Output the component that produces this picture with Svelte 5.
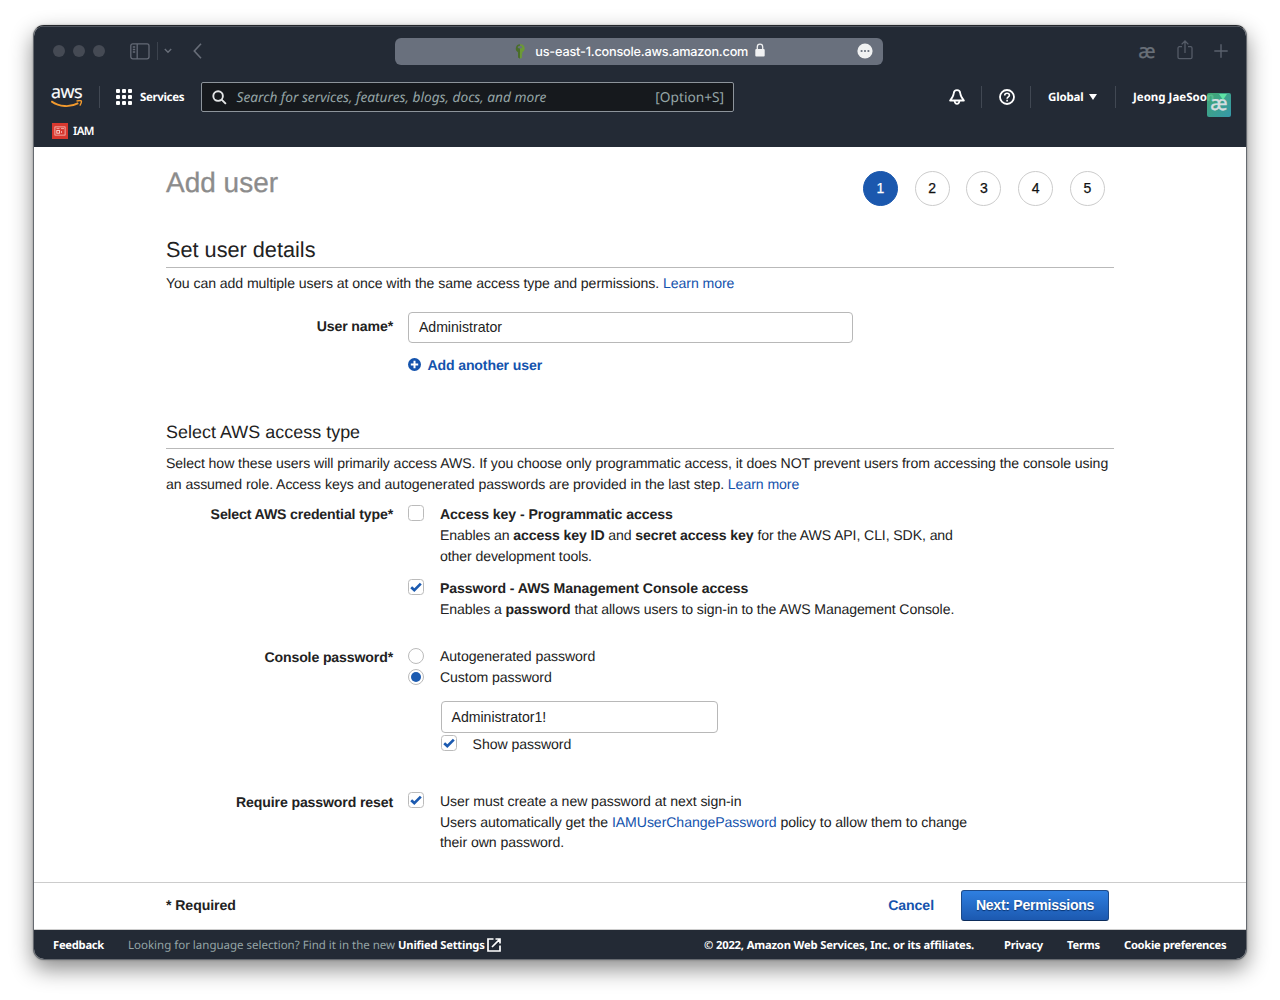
<script lang="ts">
  const steps = [1, 2, 3, 4, 5];
  let current = $state(1);

  let userName = $state("Administrator");
  let password = $state("Administrator1!");
  let programmatic = $state(false);
  let consoleAccess = $state(true);
  let passwordMode = $state<"auto" | "custom">("custom");
  let showPassword = $state(true);
  let requireReset = $state(true);
</script>

{#snippet check(on: boolean, toggle: () => void, label: string)}
  <button class="box" role="checkbox" aria-checked={on} aria-label={label} onclick={toggle}>
    {#if on}
      <svg width="12" height="10" viewBox="0 0 12 10"><path d="M1.2 5.2 4.3 8.1 10.8 1.6" fill="none" stroke="#1b5ab0" stroke-width="2.7" /></svg>
    {/if}
  </button>
{/snippet}

<div class="window">
  <header>
    <div class="titlebar">
      <div class="lights"><i></i><i></i><i></i></div>
      <svg class="sidebar" width="20" height="17" viewBox="0 0 20 17" fill="none" stroke="#646a76" stroke-width="1.3">
        <rect x=".8" y=".8" width="18.2" height="15" rx="2" />
        <path d="M7.2 1v15M2.8 4h2.4M2.8 6.5h2.4M2.8 9h2.4" />
      </svg>
      <span class="tsep"></span>
      <svg class="chev" width="8" height="6" viewBox="0 0 8 6" fill="none" stroke="#686e79" stroke-width="1.4"><path d="M.8 1 4 4.2 7.2 1" /></svg>
      <svg class="back" width="9" height="16" viewBox="0 0 9 16" fill="none" stroke="#686e79" stroke-width="1.6"><path d="M8 .8 1.3 8 8 15.2" /></svg>
      <div class="address">
        <svg class="key" width="10" height="15" viewBox="0 0 10 15">
          <path d="M5 .3a4.2 4.2 0 0 0-2 7.900V13.600L5 14.800z" fill="#4a6e2a" />
          <path d="M5 .3a4.200 4.200 0 0 1 2.400 7.900v1.500l-.8.900.8.900-.8 1 .8.900-2.400 1.400z" fill="#6c9a35" />
          <ellipse cx="5" cy="3.2" rx="2" ry="1.4" fill="#69717e" />
        </svg>
        <span class="url">us-east-1.console.aws.amazon.com</span>
        <svg class="lock" width="10" height="14" viewBox="0 0 10 14"><rect x=".3" y="6" width="9.4" height="7.6" rx="1" fill="#f0f1f2" /><path d="M2.3 6.5V3.9a2.7 2.7 0 0 1 5.4 0v2.6" fill="none" stroke="#f0f1f2" stroke-width="1.3" /></svg>
        <svg class="more" width="16" height="16" viewBox="0 0 16 16"><circle cx="8" cy="8" r="7.6" fill="#f0f1f2" /><g fill="#69717e"><circle cx="4.6" cy="8" r="1.1" /><circle cx="8" cy="8" r="1.1" /><circle cx="11.4" cy="8" r="1.1" /></g></svg>
      </div>
      <span class="ae">æ</span>
      <svg class="share" width="16" height="20" viewBox="0 0 16 20" fill="none" stroke="#555c68" stroke-width="1.3"><path d="M5 6.7H2.4A1.4 1.4 0 0 0 1 8.1v9.1a1.4 1.4 0 0 0 1.4 1.4h11.2a1.4 1.4 0 0 0 1.4-1.4V8.1a1.4 1.4 0 0 0-1.4-1.4H11M8 13V1.2M4.6 4.4 8 1l3.4 3.4" /></svg>
      <svg class="plus" width="14" height="14" viewBox="0 0 14 14" stroke="#5b626e" stroke-width="1.4"><path d="M7 .3v13.4M.3 7h13.4" /></svg>
    </div>

    <nav>
      <div class="aws">
        <span>aws</span>
        <svg width="32" height="8" viewBox="0 0 32 8" fill="none" stroke="#f29a2e"><path d="M.3 1.200c8 5.800 19 6.400 27 2" stroke-width="1.900" /><path d="M25.500 1c2.500-.6 4.400-.5 4.800 0s-.2 3-1.500 4.600" stroke-width="1.400" /></svg>
      </div>
      <span class="nsep"></span>
      <svg class="grid" width="16" height="16" viewBox="0 0 16 16" fill="#fff">
        {#each [0, 6, 12] as gy}
          {#each [0, 6, 12] as gx}
            <rect x={gx} y={gy} width="4" height="4" rx="1" />
          {/each}
        {/each}
      </svg>
      <b class="services">Services</b>
      <div class="search">
        <svg width="15" height="15" viewBox="0 0 15 15" fill="none" stroke="#e3e5e6" stroke-width="1.9"><circle cx="6.1" cy="6.1" r="4.8" /><path d="m9.6 9.6 4.3 4.3" /></svg>
        <em>Search for services, features, blogs, docs, and more</em>
        <span>[Option+S]</span>
      </div>
      <svg class="bell" width="16" height="16" viewBox="0 0 16 16" fill="none" stroke="#fff" stroke-width="1.8" stroke-linejoin="round"><path d="M8 1.200C6 1.200 4.900 2.600 4.700 4.500 4.500 7 3.300 8.800 1.100 11.500h13.800C12.700 8.800 11.500 7 11.300 4.500 11.100 2.600 10 1.200 8 1.200z" /><path d="M5.600 12c.2 1.800 1 2.800 2.400 2.800s2.200-1 2.400-2.800" /></svg>
      <span class="nsep"></span>
      <svg class="help" width="16" height="16" viewBox="0 0 16 16" fill="none" stroke="#fff" stroke-width="1.8"><circle cx="8" cy="8" r="7" /><path d="M5.700 6.500c0-3 4.700-2.800 4.700-.2 0 1.700-2.300 1.500-2.300 3.500M8.100 10.800v1.700" stroke-width="1.600" /></svg>
      <span class="nsep"></span>
      <b class="region">Global</b>
      <i class="caret"></i>
      <span class="nsep"></span>
      <b class="account">Jeong JaeSoon</b>
      <span class="badge"><i class="caret"></i>æ</span>
    </nav>

    <div class="favorites">
      <svg width="16" height="16" viewBox="0 0 16 16"><rect width="16" height="16" fill="#d8382f" /><g fill="none" stroke="#fbd9d5"><rect x="2.900" y="3.900" width="10.200" height="8.200" stroke-width=".7" /><rect x="4.800" y="7.500" width="2.700" height="2.700" stroke-width=".9" /><path d="M4.500 5.600h3M9 5.600h3M9.500 8v2" stroke-width=".7" /></g></svg>
      <span>IAM</span>
    </div>
  </header>

  <main>
    <div class="title">
      <h1>Add user</h1>
      <div class="steps">
        {#each steps as n}
          <button class:active={n === current} onclick={() => (current = n)}>{n}</button>
        {/each}
      </div>
    </div>

    <h2>Set user details</h2>
    <p>You can add multiple users at once with the same access type and permissions. <a href="#more">Learn more</a></p>

    <div class="row name">
      <label for="user">User name*</label>
      <div>
        <input id="user" bind:value={userName} />
        <a class="another" href="#add">
          <svg width="13" height="13" viewBox="0 0 13 13"><circle cx="6.500" cy="6.500" r="6.500" fill="#1453ad" /><path d="M6.500 2.800v7.400M2.800 6.500h7.400" stroke="#fff" stroke-width="2" /></svg>
          <span>Add another user</span>
        </a>
      </div>
    </div>

    <h3>Select AWS access type</h3>
    <p class="access">
      Select how these users will primarily access AWS. If you choose only programmatic access, it does NOT prevent users from accessing the console using<br />
      an assumed role. Access keys and autogenerated passwords are provided in the last step. <a href="#more">Learn more</a>
    </p>

    <div class="row credential">
      <span class="label">Select AWS credential type*</span>
      <div class="options">
        <div class="option">
          {@render check(programmatic, () => (programmatic = !programmatic), "Access key")}
          <div>
            <b class="head">Access key - Programmatic access</b>
            <span class="desc">Enables an <b>access key ID</b> and <b>secret access key</b> for the AWS API, CLI, SDK, and<br />other development tools.</span>
          </div>
        </div>
        <div class="option">
          {@render check(consoleAccess, () => (consoleAccess = !consoleAccess), "Password")}
          <div>
            <b class="head">Password - AWS Management Console access</b>
            <span class="desc">Enables a <b>password</b> that allows users to sign-in to the AWS Management Console.</span>
          </div>
        </div>
      </div>
    </div>

    <div class="row console">
      <span class="label">Console password*</span>
      <div>
        <div class="option">
          <button class="box radio" role="radio" aria-checked={passwordMode === "auto"} aria-label="Autogenerated password" onclick={() => (passwordMode = "auto")}></button>
          <div>Autogenerated password</div>
        </div>
        <div class="option">
          <button class="box radio" role="radio" aria-checked={passwordMode === "custom"} aria-label="Custom password" onclick={() => (passwordMode = "custom")}></button>
          <div>Custom password</div>
        </div>
        <div class="custom">
          <input type={showPassword ? "text" : "password"} bind:value={password} aria-label="Custom password" />
          <div class="option">
            {@render check(showPassword, () => (showPassword = !showPassword), "Show password")}
            <div>Show password</div>
          </div>
        </div>
      </div>
    </div>

    <div class="row reset">
      <span class="label">Require password reset</span>
      <div class="option">
        {@render check(requireReset, () => (requireReset = !requireReset), "Require password reset")}
        <div>
          User must create a new password at next sign-in<br />
          Users automatically get the <a href="#policy">IAMUserChangePassword</a> policy to allow them to change<br />their own password.
        </div>
      </div>
    </div>
  </main>

  <div class="actions">
    <b>* Required</b>
    <a href="#cancel">Cancel</a>
    <button>Next: Permissions</button>
  </div>

  <footer>
    <b class="feedback">Feedback</b>
    <span class="lang">Looking for language selection? Find it in the new</span>
    <b class="unified">Unified Settings</b>
    <svg width="14" height="14" viewBox="0 0 14 14" fill="none" stroke="#fff" stroke-width="1.700"><path d="M6.500 1H1v12h12V7.500M8.500 1H13v4.500M12.600 1.400 5 9" /></svg>
    <b class="copy">© 2022, Amazon Web Services, Inc. or its affiliates.</b>
    <b class="privacy">Privacy</b>
    <b class="terms">Terms</b>
    <b class="cookie">Cookie preferences</b>
  </footer>
</div>

<style>
  :global(body) { background:#fff; }
  :global(#app) { display:flow-root; min-height:1000px; }
  .window {
    box-sizing:border-box; width:1214px; height:935px; margin:25px 0 0 33px; display:flex; flex-direction:column;
    overflow:hidden; border:1px solid #666a70; border-top-color:#23262b; border-radius:11px; background:#fff; color:#222;
    box-shadow:0 9px 22px rgba(0,0,0,.46), 0 0 2px rgba(0,0,0,.3);
    font:14.1px/20.7px "Liberation Sans", Arial, sans-serif; letter-spacing:-.07px; text-rendering:geometricPrecision;
  }
  svg { display:block; flex:none; }
  a { color:#1453ad; text-decoration:none; }
  button { padding:0; font:inherit; }

  header, footer { background:#232a35; color:#fff; font-family:"Noto Sans", sans-serif; }
  header { height:121px; flex:none; box-shadow:inset 0 1px #50555e; }
  .titlebar { display:flex; align-items:center; height:50px; padding-left:19px; }
  .lights { display:flex; gap:7.900px; }
  .lights i { width:12px; height:12px; border-radius:50%; background:#454a54; }
  .sidebar { margin-left:25px; }
  .tsep { width:1px; height:18px; margin-left:7px; background:#3c434e; }
  .chev { margin-left:6px; }
  .back { margin-left:21px; }
  .address { display:flex; align-items:center; box-sizing:border-box; width:488px; height:27px; margin-left:193.500px; padding:0 10px 0 120px; border-radius:6px; background:#69707d; }
  .url { width:213px; margin-left:10px; padding-top:3px; font:500 12.700px/20px Inter, sans-serif; letter-spacing:-.19px; white-space:nowrap; }
  .lock { margin-left:7px; margin-top:-2px; }
  .more { margin-left:auto; margin-top:-1px; }
  .ae { width:20px; margin-left:255px; color:#697079; font-size:20px; line-height:20px; -webkit-text-stroke:.3px; }
  .share { margin-left:19px; margin-top:-2px; }
  .plus { margin-left:21px; }

  nav { position:relative; display:flex; align-items:center; height:42px; padding-left:18px; font-size:11.500px; letter-spacing:0; white-space:nowrap; }
  nav b { padding-top:2px; }
  .aws { width:32px; height:22px; margin-right:1px; margin-left:-1px; }
  .aws span { display:block; height:14px; font:500 18px/12px "Open Sans", sans-serif; letter-spacing:-.5px; -webkit-text-stroke:.2px; }
  .nsep { width:1px; height:22px; background:#414853; }
  .aws + .nsep { margin-left:15px; }
  .grid { margin-left:16px; }
  .services { width:61px; margin-left:8px; letter-spacing:-.35px; }
  .search { display:flex; align-items:center; box-sizing:border-box; width:533px; height:30px; padding:0 9px 0 10px; border:1px solid #8d949b; border-radius:2px; background:#16191d; color:#95a5a6; font-size:13.700px; }
  .search em { margin-left:9.500px; padding-top:2px; }
  .search span { margin-left:auto; padding-top:2px; }
  .bell { margin-left:215px; }
  .bell + .nsep { margin-left:16px; }
  .help { margin-left:17px; }
  .help + .nsep { margin-left:15px; }
  .region { width:41px; margin-left:17px; letter-spacing:-.15px; }
  .caret { width:0; height:0; border:4.500px solid transparent; border-top:6px solid #fff; border-bottom:0; }
  .caret + .nsep { margin-left:18px; }
  .account { margin-left:17px; }
  .badge { position:absolute; left:1173px; top:17px; width:24px; height:24px; border-radius:2px; background:linear-gradient(135deg, #45b678e6, #38a4b8e6); color:#d5dde0; font-size:20px; line-height:20px; text-align:center; -webkit-text-stroke:.4px; }
  .badge .caret { position:absolute; left:12px; top:1px; border-top-color:#5ee3a4; }

  .favorites { display:flex; align-items:center; gap:5px; height:26px; padding-left:18px; font-size:11.500px; font-weight:600; letter-spacing:-.6px; }
  .favorites span { padding-top:2px; }

  main { box-sizing:border-box; height:735px; flex:none; padding:19px 132px 0; }
  .title { display:flex; justify-content:space-between; height:42px; }
  h1, h2, h3 { margin:0; font-weight:400; letter-spacing:0; }
  h1 { font-size:28px; line-height:34px; color:#8c8c8c; -webkit-text-stroke:.3px; }
  h2, h3 { border-bottom:1px solid #b9b9b9; }
  h2 { margin-top:29px; padding-bottom:4px; font-size:21.700px; line-height:26px; }
  h3 { margin-top:46px; padding-bottom:5px; font-size:17.900px; line-height:22px; letter-spacing:.04px; }
  p { margin:5px 0 0; white-space:nowrap; }
  .access { margin-top:4px; }
  .steps { display:flex; gap:16.800px; margin:5px 9px 0 0; }
  .steps button { box-sizing:border-box; width:35px; height:35px; border:1px solid #ccc; border-radius:50%; background:#fff; color:#111; font-size:14px; -webkit-text-stroke:.25px; }
  .steps .active { border-color:#1b58ae; background:#1b58ae; color:#fff; }

  .row { display:grid; grid-template-columns:227px 1fr; column-gap:15.400px; white-space:nowrap; }
  .row > label, .label { font-weight:700; text-align:right; letter-spacing:-.13px; }
  .name { margin-top:18px; }
  .name label { padding-top:4px; }
  input { box-sizing:border-box; display:block; height:32px; padding:0 9.500px; border:1px solid #b8b8b8; border-radius:4px; background:#fff; color:#222; font:inherit; outline:none; }
  .name input { width:444.500px; height:31px; }
  .another { display:flex; align-items:center; gap:6px; margin-top:12px; font-weight:700; letter-spacing:-.13px; }
  .another svg { margin-top:-2px; }

  .option { display:grid; grid-template-columns:16px 1fr; column-gap:15.600px; }
  .box { box-sizing:border-box; display:grid; place-items:center; width:16px; height:16px; margin-top:1px; border:1px solid #bbb; border-radius:3.500px; background:#fff; }
  .radio { border-radius:50%; margin-top:2px; }
  .radio[aria-checked="true"]::after { content:""; width:10px; height:10px; border-radius:50%; background:#1b5ab0; }
  .head { display:block; margin-bottom:.6px; }
  .desc { letter-spacing:-.1px; }
  .credential { margin-top:9px; }
  .options { display:grid; gap:11.300px; }
  .console { margin-top:26px; }
  .console .label, .reset .label { padding-top:1px; }
  .custom { margin:13.500px 0 0 32.600px; }
  .custom input { width:277px; margin-bottom:1.500px; }
  .reset { margin-top:36px; }

  .actions { display:flex; align-items:center; box-sizing:border-box; height:48px; flex:none; padding:0 137px 2px 132px; border-top:1px solid #ccc; border-bottom:1px solid #ccc; font-weight:700; }
  .actions a { margin-left:auto; }
  .actions button { box-sizing:border-box; width:148px; height:31px; margin-left:27px; border:1px solid #1c4a8a; border-bottom-color:#0c2c5c; border-radius:3px; background:linear-gradient(#2f7fe0, #1c59b0); color:#fff; font-weight:700; letter-spacing:-.28px; text-shadow:0 1px 1px #0a3470; }

  footer { display:flex; align-items:center; height:29px; flex:1; box-sizing:border-box; padding:3px 0 0 19px; font-size:11.200px; letter-spacing:-.16px; white-space:nowrap; }
  .feedback { width:75px; padding-top:1px; letter-spacing:-.25px; }
  .lang { width:270px; color:#95a5a6; font-size:11.500px; letter-spacing:0; }
  .unified { width:89px; }
  footer svg { margin-top:-2px; }
  .copy { width:300px; margin-left:203px; }
  .privacy { width:63px; letter-spacing:-.25px; }
  .terms { width:57px; }
  .cookie { letter-spacing:-.28px; }
</style>
